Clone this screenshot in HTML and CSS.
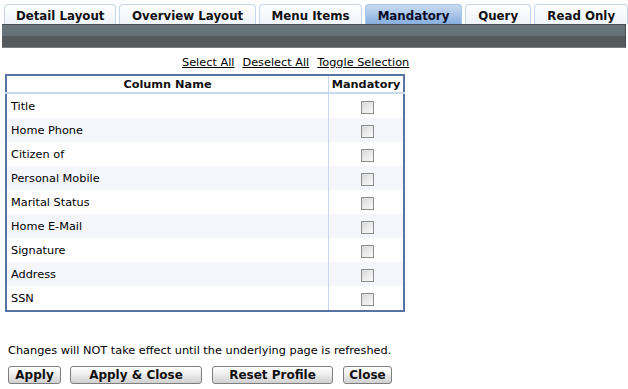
FILE: index.html
```html
<!DOCTYPE html>
<html lang="en">
<head>
<meta charset="UTF-8" />
<title>Mandatory</title>
<link rel="stylesheet" href="styles.css">
</head>
<body>
  <div class="tabs">
    <div class="tab">Detail Layout</div>
    <div class="tab">Overview Layout</div>
    <div class="tab">Menu Items</div>
    <div class="tab active">Mandatory</div>
    <div class="tab">Query</div>
    <div class="tab">Read Only</div>
  </div>
  <div class="toolbar"></div>

  <div class="links">
    <a href="#">Select All</a>
    <a href="#">Deselect All</a>
    <a href="#">Toggle Selection</a>
  </div>

  <table class="grid">
    <thead>
      <tr><th class="name">Column Name</th><th class="check">Mandatory</th></tr>
    </thead>
    <tbody>
      <tr><td>Title</td><td class="check"><span class="box"></span></td></tr>
      <tr><td>Home Phone</td><td class="check"><span class="box"></span></td></tr>
      <tr><td>Citizen of</td><td class="check"><span class="box"></span></td></tr>
      <tr><td>Personal Mobile</td><td class="check"><span class="box"></span></td></tr>
      <tr><td>Marital Status</td><td class="check"><span class="box"></span></td></tr>
      <tr><td>Home E-Mail</td><td class="check"><span class="box"></span></td></tr>
      <tr><td>Signature</td><td class="check"><span class="box"></span></td></tr>
      <tr><td>Address</td><td class="check"><span class="box"></span></td></tr>
      <tr><td>SSN</td><td class="check"><span class="box"></span></td></tr>
    </tbody>
  </table>

  <p class="note">Changes will NOT take effect until the underlying page is refreshed.</p>

  <div class="buttons">
    <button class="btn-apply">Apply</button>
    <button class="btn-apply-close">Apply &amp; Close</button>
    <button class="btn-reset">Reset Profile</button>
    <button class="btn-close">Close</button>
  </div>
</body>
</html>
```

FILE: styles.css
```css
body {
  margin: 0;
  background-color: #fff;
  color: #000;
  font-family: 'DejaVu Sans', Verdana, sans-serif;
  font-size: 11.3px;
}
.tabs {
  display: flex;
  gap: 3px;
  padding: 4px 0 0 4px;
  height: 20px;
}
.tab {
  height: 19px;
  line-height: 22px;
  border: 1px solid #c6d6ec;
  border-bottom: none;
  border-radius: 4px 4px 0 0;
  background: linear-gradient(#ffffff, #eef3fa);
  font-weight: bold;
  font-size: 11.8px;
  text-align: center;
  color: #111;
}
.tab:nth-child(1) { width: 111px; }
.tab:nth-child(2) { width: 135px; }
.tab:nth-child(3) { width: 102px; }
.tab:nth-child(4) { width: 95px; }
.tab:nth-child(5) { width: 65px; }
.tab:nth-child(6) { width: 92px; }
.tab.active {
  background: linear-gradient(#c9dcf2, #86aedd);
  border-color: #a8c4e6;
  color: #0a0a2a;
}
.toolbar {
  margin: 0 2px;
  height: 24px;
  box-sizing: border-box;
  background: linear-gradient(#667379 0, #667379 11px, #555b5d 11px, #555b5d 22px);
  border-top: 1px solid #4a5052;
  border-bottom: 1px solid #7a8084;
  border-right: 1px solid #4a5052;
}
.links {
  display: flex;
  gap: 8px;
  margin: 8px 0 0 182px;
  line-height: 14px;
}
.links a {
  color: #000;
  text-decoration: underline;
}
.grid {
  margin: 4px 0 0 5px;
  width: 400px;
  border: 2px solid #5673a3;
  border-collapse: collapse;
  font-size: 11.3px;
}
.grid th {
  height: 16px;
  padding: 0;
  font-weight: bold;
  font-size: 11.3px;
  border-bottom: 2px solid #c8d8ee;
  color: #111;
}
.grid th.check {
  border-left: 1px solid #c8d8ee;
  width: 74px;
}
.grid td {
  height: 24px;
  padding: 0 0 0 4px;
}
.grid td.check {
  border-left: 1px solid #c8d8ee;
  text-align: center;
  padding: 0 0 0 2px;
}
.grid tbody tr:nth-child(even) td {
  background-color: #f4f6fc;
}
.box {
  display: inline-block;
  width: 11px;
  height: 11px;
  margin-top: 3px;
  border: 1px solid #8e8e8e;
  background: linear-gradient(135deg, #d8d8d8, #fafafa);
  vertical-align: middle;
}
.note {
  margin: 32px 0 0 8px;
  line-height: 13px;
}
.buttons {
  display: flex;
  margin: 9px 0 0 8px;
}
.buttons button {
  height: 18px;
  padding: 0;
  font-family: 'DejaVu Sans', Verdana, sans-serif;
  font-size: 12px;
  font-weight: bold;
  color: #111;
  border: 1px solid #7e7e7e;
  border-radius: 3px;
  background: linear-gradient(#ffffff, #f0f0f0 40%, #d0d0d0);
  line-height: 16px;
}
.btn-apply { width: 53px; margin-right: 9px; }
.btn-apply-close { width: 132px; margin-right: 10px; }
.btn-reset { width: 121px; margin-right: 10px; }
.btn-close { width: 49px; }
```
